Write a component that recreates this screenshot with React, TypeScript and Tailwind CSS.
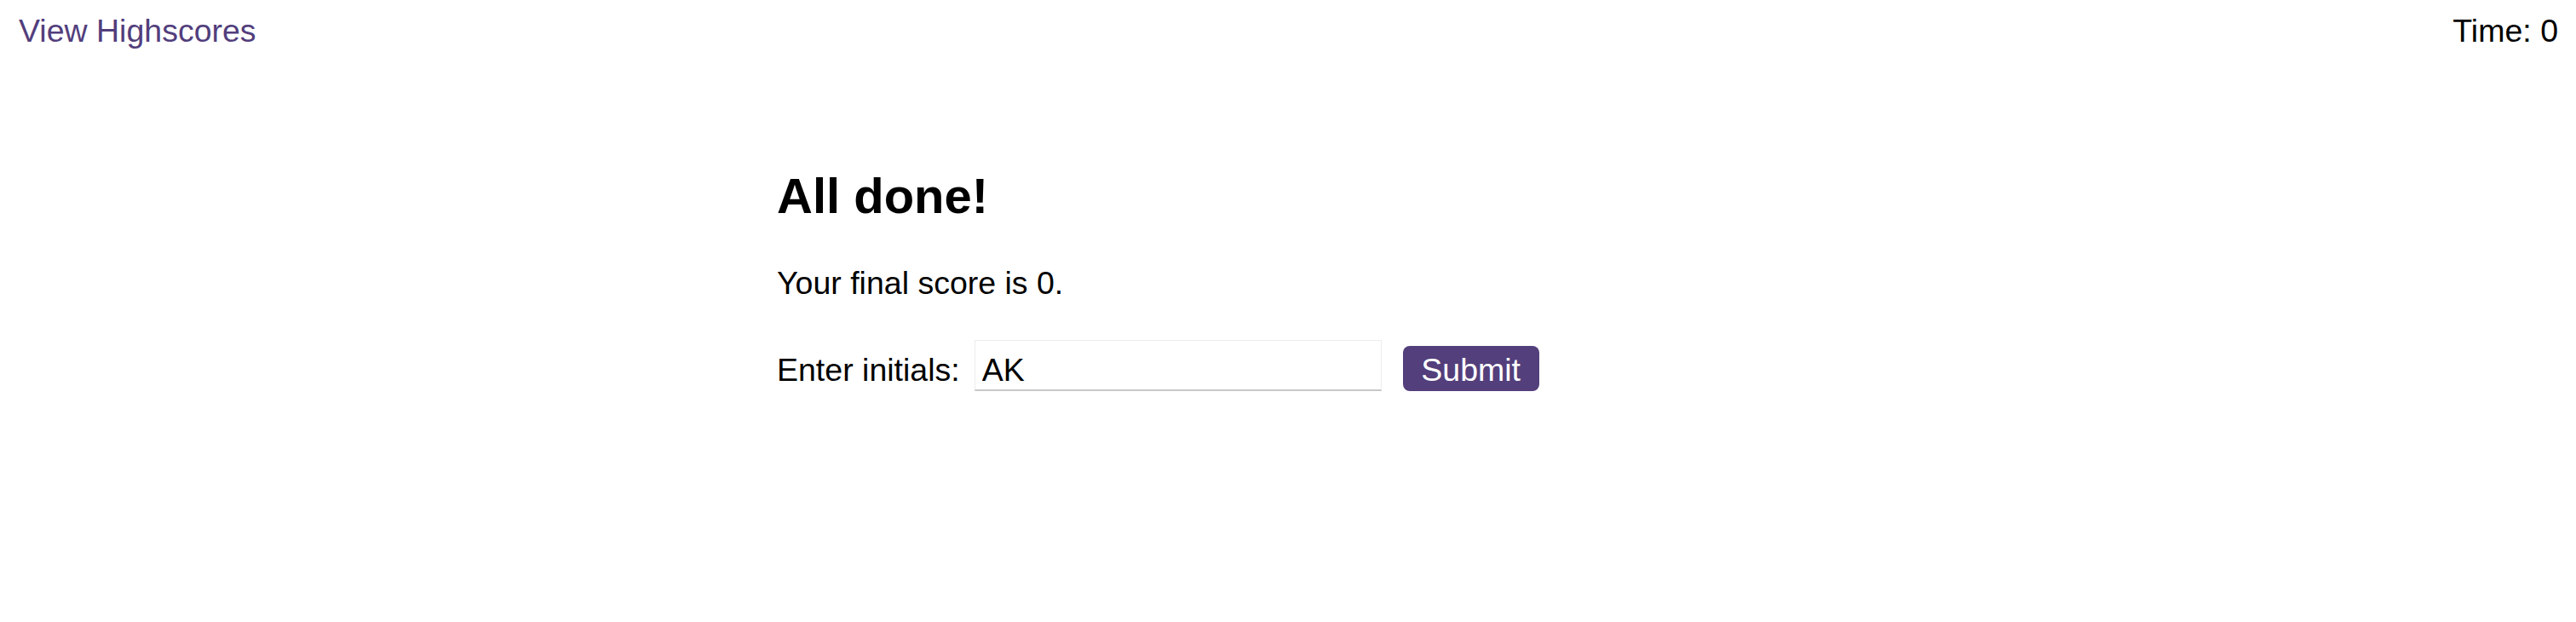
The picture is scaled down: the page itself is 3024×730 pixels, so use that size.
export default function App() {
  return (
    <div className="min-h-[730px] bg-white text-black font-['Liberation_Sans',Arial,sans-serif]">
      <header className="flex items-start justify-between pt-4 pl-[22px] pr-[21px] text-[37.5px] leading-[41px]">
        <a href="#" className="text-[#523e7c] no-underline">
          View Highscores
        </a>
        <span>Time: 0</span>
      </header>

      <main className="mx-auto mt-[141px] w-[1200px]">
        <h1 className="text-[58px] font-bold leading-[64px]">All done!</h1>
        <p className="mt-[49px] text-[37.5px] leading-[42px]">Your final score is 0.</p>
        <form className="mt-[46px] flex items-baseline text-[37.5px] leading-[42px]">
          <label htmlFor="initials">Enter initials:</label>
          <input
            id="initials"
            defaultValue="AK"
            className="ml-[17px] h-[60px] w-[478px] border border-[#ececec] border-b-2 border-b-[#c8c8c8] bg-white pl-[8px] pt-[13px] pb-[2px] text-[37.5px] leading-[42px] outline-none"
          />
          <button
            type="button"
            className="ml-[25px] h-[53px] w-[160px] rounded-[8px] bg-[#533f7b] pt-[7px] pb-[4px] text-center text-[37.5px] leading-[42px] text-white"
          >
            Submit
          </button>
        </form>
      </main>
    </div>
  );
}
